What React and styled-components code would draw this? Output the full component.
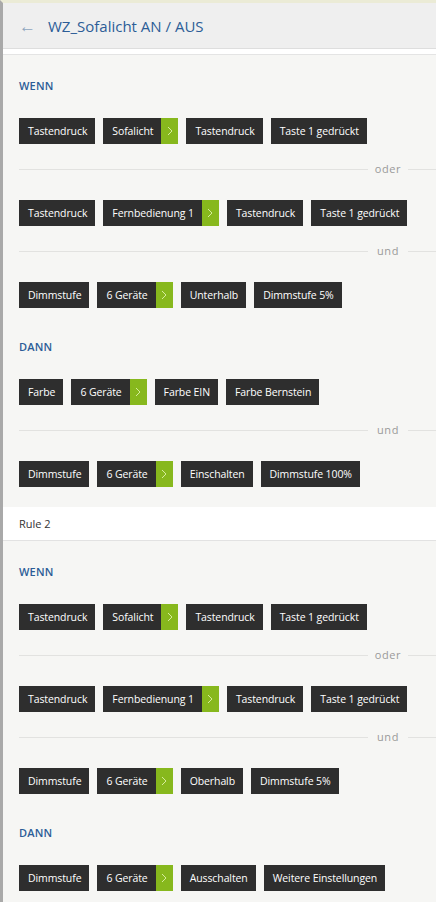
import React from 'react';
import styled, { createGlobalStyle } from 'styled-components';

const rules = [
  {
    title: null,
    sections: [
      {
        label: 'WENN',
        rows: [
          ['Tastendruck', 'Sofalicht', 'Tastendruck', 'Taste 1 gedrückt'],
          ['Tastendruck', 'Fernbedienung 1', 'Tastendruck', 'Taste 1 gedrückt'],
          ['Dimmstufe', '6 Geräte', 'Unterhalb', 'Dimmstufe 5%'],
        ],
        joins: ['oder', 'und'],
      },
      {
        label: 'DANN',
        rows: [
          ['Farbe', '6 Geräte', 'Farbe EIN', 'Farbe Bernstein'],
          ['Dimmstufe', '6 Geräte', 'Einschalten', 'Dimmstufe 100%'],
        ],
        joins: ['und'],
      },
    ],
  },
  {
    title: 'Rule 2',
    sections: [
      {
        label: 'WENN',
        rows: [
          ['Tastendruck', 'Sofalicht', 'Tastendruck', 'Taste 1 gedrückt'],
          ['Tastendruck', 'Fernbedienung 1', 'Tastendruck', 'Taste 1 gedrückt'],
          ['Dimmstufe', '6 Geräte', 'Oberhalb', 'Dimmstufe 5%'],
        ],
        joins: ['oder', 'und'],
      },
      {
        label: 'DANN',
        rows: [['Dimmstufe', '6 Geräte', 'Ausschalten', 'Weitere Einstellungen']],
        joins: [],
      },
    ],
  },
];

function RuleRow({ items }) {
  return (
    <Row>
      {items.map((text, i) => (
        <Chip key={i}>
          <ChipText>{text}</ChipText>
          {i === 1 && (
            <ChipArrow>
              <svg width="6" height="10" viewBox="0 0 6 10">
                <polyline points="1,1 5,5 1,9" fill="none" stroke="#d6ec9c" strokeWidth="1" />
              </svg>
            </ChipArrow>
          )}
        </Chip>
      ))}
    </Row>
  );
}

function App() {
  return (
    <>
      <GlobalStyle />
      <Page>
        <Header>
          <BackArrow>←</BackArrow>
          <Title>WZ_Sofalicht AN / AUS</Title>
        </Header>
        <HeaderGap />
        {rules.map((rule, r) => (
          <React.Fragment key={r}>
            {rule.title && <RuleTitle>{rule.title}</RuleTitle>}
            <RuleBody>
              {rule.sections.map((section, s) => (
                <Section key={s}>
                  <SectionLabel>{section.label}</SectionLabel>
                  {section.rows.map((row, i) => (
                    <React.Fragment key={i}>
                      {i > 0 && (
                        <Divider>
                          <DividerLine />
                          <DividerText>{section.joins[i - 1]}</DividerText>
                          <DividerLine $end />
                        </Divider>
                      )}
                      <RuleRow items={row} />
                    </React.Fragment>
                  ))}
                </Section>
              ))}
            </RuleBody>
          </React.Fragment>
        ))}
      </Page>
    </>
  );
}

const GlobalStyle = createGlobalStyle`
  html, body {
    margin: 0;
    padding: 0;
    background: #f6f6f4;
    font-family: 'Open Sans', 'Noto Sans', sans-serif;
  }
`;

const Page = styled.div`
  min-height: 902px;
  border-top: 3px solid #ebebd6;
  border-left: 3px solid #a9a9a9;
  background: #f6f6f4;
  box-sizing: border-box;
  overflow: hidden;
`;

const Header = styled.div`
  display: flex;
  align-items: center;
  height: 45px;
  padding-left: 16px;
  background-color: #efefef;
  border-bottom: 1px solid #dedede;
`;

const BackArrow = styled.span`
  width: 29px;
  color: #8fa6bf;
  font-size: 17px;
  line-height: 20px;
`;

const Title = styled.h1`
  margin: 0;
  color: #2c5d97;
  font-size: 15px;
  font-weight: 400;
  line-height: 24px;
`;

const HeaderGap = styled.div`
  height: 5px;
  background-color: #fff;
  border-bottom: 1px solid #e4e4e4;
`;

const RuleTitle = styled.div`
  height: 33px;
  padding-left: 16px;
  margin-top: 20px;
  background-color: #fff;
  border-bottom: 1px solid #e2e2e2;
  color: #333;
  font-size: 11px;
  line-height: 33px;
`;

const RuleBody = styled.div`
  padding: 23px 0 0 16px;
`;

const Section = styled.div`
  &:not(:first-child) {
    margin-top: 31px;
  }
`;

const SectionLabel = styled.div`
  margin-bottom: 24px;
  color: #2c5d97;
  font-size: 11px;
  font-weight: 600;
  line-height: 16px;
  letter-spacing: 0.2px;
`;

const Row = styled.div`
  display: flex;
  gap: 8px;
  height: 26px;
`;

const Chip = styled.div`
  display: flex;
  align-items: stretch;
  background-color: #2e2e2e;
`;

const ChipText = styled.span`
  padding: 0 8px 0 9px;
  color: #fff;
  font-size: 10.5px;
  line-height: 26px;
  letter-spacing: -0.1px;
  white-space: nowrap;
`;

const ChipArrow = styled.span`
  display: flex;
  align-items: center;
  justify-content: center;
  width: 17px;
  background-color: #87b81d;
`;

const Divider = styled.div`
  display: flex;
  align-items: center;
  height: 16px;
  margin: 17px 0 23px;
`;

const DividerLine = styled.div`
  flex: ${p => (p.$end ? '0 0 28px' : '1')};
  height: 1px;
  background-color: #e2e2e0;
`;

const DividerText = styled.span`
  width: 40px;
  color: #9a9a9a;
  font-size: 11px;
  line-height: 16px;
  letter-spacing: 0.6px;
  text-align: center;
`;

export default App;
